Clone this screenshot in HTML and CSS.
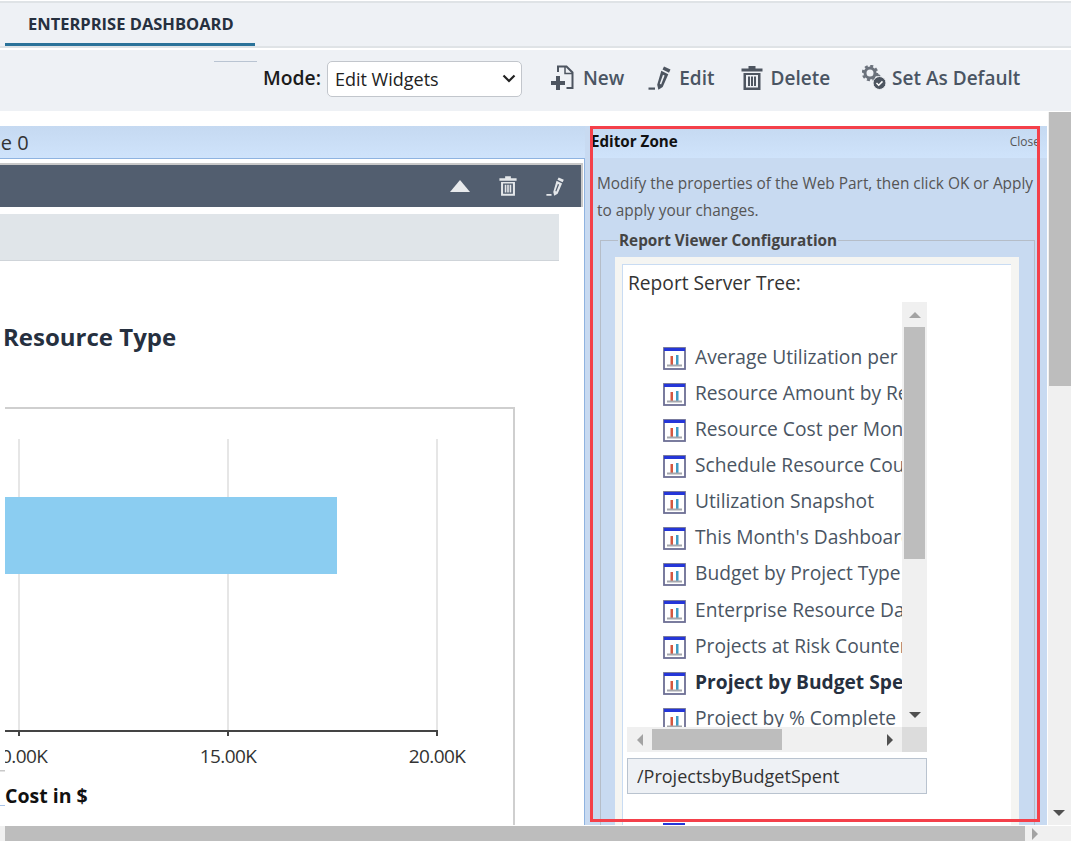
FILE: index.html
```html
<!DOCTYPE html>
<html lang="en">
<head>
  <meta charset="UTF-8">
  <title>Enterprise Dashboard</title>
  <link rel="stylesheet" href="styles.css">
</head>
<body>
  <svg class="defs" width="0" height="0">
    <symbol id="i-report" viewBox="0 0 23 23">
      <rect x="1" y="1" width="21" height="21" fill="#fff" stroke="#6c6e94" stroke-width="1.800"/>
      <rect x="1" y="1" width="21" height="3" fill="#2536d8"/>
      <rect x="7.500" y="9" width="2.500" height="9" fill="#d4573f"/>
      <rect x="13" y="8" width="2.500" height="10" fill="#3f9cc4"/>
      <rect x="4" y="17.500" width="15" height="2" fill="#a5a7ad"/>
    </symbol>
    <symbol id="i-pencil" viewBox="0 0 24 24">
      <path d="M0.500 21.500h6.500v2.200h-6.500z"/>
      <path d="M16 .5l6.500 3-1.500 3.200-6.500-3.100zM13.300 4.800l7 3.400-5.600 12.800-4.300 2.800-1.200-5zM15 8.800l-3.200 8.900 1.300.7 3.500-8.800z" fill-rule="evenodd"/>
    </symbol>
    <symbol id="i-trash" viewBox="0 0 22 24">
      <path d="M7.500 0h7v2.500h7v3h-21v-3h7zM2.500 7h17v17h-17zM5 9v12.500h12v-12.500zM7 10.500h2v9.500h-2zM10 10.500h2v9.500h-2zM13 10.500h2v9.500h-2z" fill-rule="evenodd"/>
    </symbol>
  </svg>

  <div class="page">
    <div class="tabs">
      <div class="tab">ENTERPRISE DASHBOARD</div>
    </div>

    <div class="toolbar">
      <span class="stub"></span>
      <label class="mode-label" for="mode">Mode:</label>
      <select class="mode" id="mode">
        <option>Edit Widgets</option>
      </select>
      <a class="tool tool-new">
        <svg width="23" height="25" viewBox="0 0 23 25">
          <path d="M7 7v-5.500h8.500l6 6v15.500h-6" fill="none" stroke="#4d5560" stroke-width="2"/>
          <path d="M14 2v6.500h7" fill="none" stroke="#4d5560" stroke-width="1.500"/>
          <path d="M5 11h4v5h5v4h-5v5h-4v-5h-5v-4h5z" fill="#4d5560"/>
        </svg>
        New
      </a>
      <a class="tool tool-edit">
        <svg class="ic-dark" width="24" height="24"><use href="#i-pencil"/></svg>
        Edit
      </a>
      <a class="tool tool-delete">
        <svg class="ic-dark" width="22" height="24"><use href="#i-trash"/></svg>
        Delete
      </a>
      <a class="tool tool-default">
        <svg width="25" height="25" viewBox="0 0 25 25">
          <circle cx="8" cy="8" r="5" fill="none" stroke="#6b727c" stroke-width="3"/>
          <circle cx="8" cy="8" r="7" fill="none" stroke="#6b727c" stroke-width="2.500" stroke-dasharray="3 2.500"/>
          <circle cx="15" cy="13" r="3" fill="none" stroke="#6b727c" stroke-width="2"/>
          <circle cx="17.500" cy="18" r="6.500" fill="#4d5560" stroke="#eef1f5"/>
          <path d="M14.500 18l2.200 2.200 3.800-3.800" fill="none" stroke="#fff" stroke-width="1.500"/>
        </svg>
        Set As Default
      </a>
    </div>

    <div class="work">
      <div class="work-main">
        <div class="zones">
          <div class="zone-left">
            <div class="zone-head"><span class="zone-name">Zone 0</span></div>
            <div class="widget">
              <div class="widget-head">
                <span class="arrow-up"></span>
                <svg class="ic-light" width="18" height="20"><use href="#i-trash"/></svg>
                <svg class="ic-light" width="19" height="19"><use href="#i-pencil"/></svg>
              </div>
              <div class="widget-bar"></div>
              <h2 class="chart-title">Resource Type</h2>
              <svg class="chart" width="520" height="425" viewBox="0 0 520 425">
                <rect x="0" y="370" width="5" height="1.500" fill="#c9c9c9"/>
                <rect x="0" y="405" width="5" height="1" fill="#a9c4e8"/>
                <svg x="5" y="0" width="515" height="425">
                  <path d="M-5 8H509V425" fill="none" stroke="#cfcfcf" stroke-width="2"/>
                  <path d="M14 39V331M223 39V331M432 39V331" stroke="#dedede" stroke-width="1.500"/>
                  <rect x="0" y="97" width="332" height="77" fill="#8bcdf1"/>
                  <path d="M0 331H433M14 331v5M223 331v5M432 331v5" fill="none" stroke="#444" stroke-width="2"/>
                  <text class="tick" x="14" y="363" text-anchor="middle">10.00K</text>
                  <text class="tick" x="223" y="363" text-anchor="middle">15.00K</text>
                  <text class="tick" x="432" y="363" text-anchor="middle">20.00K</text>
                  <text class="axis-name" x="0" y="403">Cost in $</text>
                </svg>
              </svg>
            </div>
          </div>

          <div class="zone-editor">
            <div class="zone-head editor-head">
              <b class="editor-title">Editor Zone</b>
              <span class="editor-close">Close</span>
            </div>
            <div class="editor-body">
              <p class="editor-note">Modify the properties of the Web Part, then click OK or Apply to apply your changes.</p>
              <fieldset class="config">
                <legend>Report Viewer Configuration</legend>
                <div class="config-inner">
                  <div class="config-panel">
                    <div class="tree-label">Report Server Tree:</div>
                    <div class="tree">
                      <ul class="tree-list">
                        <li><svg width="23" height="23"><use href="#i-report"/></svg>Average Utilization per Resource</li>
                        <li><svg width="23" height="23"><use href="#i-report"/></svg>Resource Amount by Resource</li>
                        <li><svg width="23" height="23"><use href="#i-report"/></svg>Resource Cost per Month</li>
                        <li><svg width="23" height="23"><use href="#i-report"/></svg>Schedule Resource Count</li>
                        <li><svg width="23" height="23"><use href="#i-report"/></svg>Utilization Snapshot</li>
                        <li><svg width="23" height="23"><use href="#i-report"/></svg>This Month's Dashboard</li>
                        <li><svg width="23" height="23"><use href="#i-report"/></svg>Budget by Project Type</li>
                        <li class="row-shift"><svg width="23" height="23"><use href="#i-report"/></svg>Enterprise Resource Dashboard</li>
                        <li><svg width="23" height="23"><use href="#i-report"/></svg>Projects at Risk Counter</li>
                        <li class="current"><svg width="23" height="23"><use href="#i-report"/></svg>Project by Budget Spent</li>
                        <li><svg width="23" height="23"><use href="#i-report"/></svg>Project by % Complete</li>
                      </ul>
                      <div class="sb-v">
                        <span class="sb-btn"><i class="tri tri-up tri-off"></i></span>
                        <span class="sb-thumb-v"></span>
                        <span class="sb-fill"></span>
                        <span class="sb-btn"><i class="tri tri-down"></i></span>
                      </div>
                      <div class="sb-h">
                        <span class="sb-btn"><i class="tri tri-left tri-off"></i></span>
                        <span class="sb-thumb-h"></span>
                        <span class="sb-fill"></span>
                        <span class="sb-btn"><i class="tri tri-right"></i></span>
                      </div>
                      <div class="sb-corner"></div>
                    </div>
                    <input class="path-box" type="text" value="/ProjectsbyBudgetSpent">
                    <div class="next-icon"></div>
                  </div>
                </div>
              </fieldset>
            </div>
          </div>
        </div>
        <div class="highlight"></div>
      </div>
      <div class="page-sb-v">
        <span class="page-thumb-v"></span>
        <i class="tri tri-down page-down"></i>
      </div>
    </div>

    <div class="page-sb-h">
      <span class="page-thumb-h"></span>
      <i class="tri tri-right tri-off page-right"></i>
    </div>
  </div>
</body>
</html>
```

FILE: styles.css
```css
body{
  margin: 0;
  font-family: "Open Sans", "Liberation Sans", sans-serif;
  background-color: #fff;
  color: #4a5563;
}
.defs{
  position: absolute;
}
.page{
  width: 1071px;
  height: 841px;
  overflow: hidden;
  display: flex;
  flex-direction: column;
}

/* tabs */
.tabs{
  height: 43px;
  margin-top: 1px;
  border-top: 2px solid #dfe3e6;
  border-bottom: 2px solid #dfe3e6;
  background-color: #eef1f5;
}
.tab{
  width: 227px;
  height: 40px;
  margin-left: 5px;
  padding-left: 23px;
  border-bottom: 3px solid #2a7299;
  font-size: 16.5px;
  font-weight: 700;
  line-height: 42px;
  color: #26303f;
}

/* toolbar */
.toolbar{
  height: 61px;
  margin-top: 2px;
  background-color: #eef1f5;
  display: flex;
  align-items: center;
}
.stub{
  width: 43px;
  height: 1px;
  margin: 11px 6px 0 214px;
  align-self: flex-start;
  background-color: #b9c4d2;
}
.mode-label{
  font-size: 19.3px;
  font-weight: 600;
  color: #1b1b1b;
  margin-right: 6px;
  margin-top: -6px;
}
.mode{
  width: 195px;
  height: 36px;
  margin-top: -4px;
  padding-left: 7px;
  border: 1px solid #c2c6cc;
  border-radius: 5px;
  appearance: none;
  background: #fff url("data:image/svg+xml,%3Csvg xmlns='http://www.w3.org/2000/svg' width='14' height='9'%3E%3Cpath d='M1.500 1.500L7 7l5.500-5.500' fill='none' stroke='%23222' stroke-width='2.200'/%3E%3C/svg%3E") no-repeat right 5px center;
  font-family: "Open Sans", sans-serif;
  font-size: 18px;
  color: #222;
}
.tool{
  display: flex;
  align-items: center;
  font-size: 19px;
  font-weight: 600;
  color: #4a5563;
  margin-top: -6px;
}
.tool-new{
  margin-left: 29px;
  gap: 9px;
}
.tool-edit{
  margin-left: 24px;
  gap: 7px;
}
.tool-delete{
  margin-left: 26px;
  gap: 8px;
}
.tool-default{
  margin-left: 32px;
  gap: 5px;
}
.ic-dark{
  fill: #4d5560;
}
.ic-light{
  fill: #e4e7ea;
}

/* work area */
.work{
  flex: 1;
  min-height: 0;
  display: flex;
  margin-top: 1px;
}
.work-main{
  position: relative;
  width: 1047px;
  padding-top: 14px;
  box-sizing: border-box;
  margin-right: 1px;
}
.zones{
  height: 699px;
  overflow: hidden;
  display: flex;
  background-color: #c8daf1;
}
.zone-head{
  height: 32px;
  background: linear-gradient(#c5d9f1, #cfe3fb);
}
.zone-left{
  width: 585px;
  margin-right: 5px;
  flex: none;
}
.zone-name{
  display: block;
  margin-left: -35px;
  font-size: 20px;
  line-height: 34px;
  color: #333;
}
.widget{
  height: 667px;
  padding-top: 4px;
  border-top: 1px solid #8fb3e0;
  border-right: 1px solid #8fb3e0;
  box-sizing: border-box;
  background-color: #fff;
}
.widget-head{
  width: 581px;
  height: 42px;
  border-top: 2px solid #c9c9c9;
  border-right: 2px solid #c9c9c9;
  background-color: #525e6f;
  display: flex;
  align-items: center;
  justify-content: flex-end;
  gap: 29px;
}
.widget-head .ic-light:last-child{
  margin-right: 16px;
}
.arrow-up{
  width: 0;
  height: 0;
  border-left: 10px solid transparent;
  border-right: 10px solid transparent;
  border-bottom: 12px solid #e8eaec;
}
.widget-bar{
  width: 559px;
  height: 46px;
  margin-top: 7px;
  border-bottom: 1px solid #cfd4d9;
  background-color: #e0e5e9;
}
.chart-title{
  margin: 60px 0 47px 3px;
  font-size: 24px;
  font-weight: 700;
  line-height: 32px;
  color: #26303f;
}
.chart{
  display: block;
}
.tick{
  font-family: "Open Sans", sans-serif;
  font-size: 19px;
  letter-spacing: -0.6px;
  fill: #333;
}
.axis-name{
  font-family: "Open Sans", sans-serif;
  font-size: 19.5px;
  font-weight: 700;
  fill: #111;
}

/* editor zone */
.zone-editor{
  flex: 1;
  min-width: 0;
}
.editor-head{
  display: flex;
  justify-content: space-between;
  align-items: center;
  box-sizing: border-box;
  padding: 0 7px 2px 1px;
}
.editor-title{
  font-size: 15.2px;
  font-weight: 700;
  color: #111;
}
.editor-close{
  font-size: 12px;
  color: #555;
}
.editor-body{
  padding: 12px 0 0 7px;
}
.editor-note{
  width: 440px;
  margin: 0;
  font-size: 15.4px;
  line-height: 27px;
  color: #555;
}
.config{
  width: 435px;
  box-sizing: border-box;
  margin: 6px 0 0 3px;
  padding: 0 15px 0 14px;
  border: 1px solid #b5bdc8;
}
.config legend{
  margin-left: 3px;
  padding: 0 1px;
  font-size: 15.3px;
  font-weight: 700;
  line-height: 20px;
  color: #444;
}
.config-inner{
  margin-top: 7px;
  padding: 7px 8px 40px 7px;
  background-color: #f5f5f2;
}
.config-panel{
  height: 600px;
  padding-left: 4px;
  border-top: 1px solid #c9dcf3;
  border-left: 1px solid #c9dcf3;
  background-color: #fff;
}
.tree-label{
  padding: 0 0 2px 1px;
  font-size: 19.2px;
  line-height: 35px;
  color: #333;
}
.tree{
  width: 300px;
  display: grid;
  grid-template-columns: 275px 25px;
  grid-template-rows: 425px 25px;
}
.tree-list{
  margin: 0;
  padding: 36px 0 0 36px;
  list-style: none;
  overflow: hidden;
  white-space: nowrap;
  font-size: 19.2px;
  color: #4a5563;
}
.tree-list li{
  height: 36px;
  display: flex;
  align-items: center;
  gap: 9px;
}
.tree-list .row-shift{
  margin-top: 1px;
}
.tree-list li svg{
  flex: none;
  margin-top: 5px;
}
.tree-list .current{
  font-weight: 700;
  color: #26303f;
}
.sb-v,.sb-h{
  display: flex;
  background-color: #f0f0f0;
}
.sb-v{
  flex-direction: column;
}
.sb-btn{
  width: 25px;
  height: 25px;
  flex: none;
  display: flex;
  align-items: center;
  justify-content: center;
}
.sb-fill{
  flex: 1;
}
.sb-thumb-v{
  width: 21px;
  height: 232px;
  margin-left: 2px;
  background-color: #bdbdbd;
}
.sb-thumb-h{
  width: 130px;
  height: 21px;
  margin-top: 2px;
  background-color: #bdbdbd;
}
.sb-corner{
  background-color: #dcdcdc;
}
.tri{
  display: block;
  width: 0;
  height: 0;
  border: 0 solid transparent;
}
.tri-up{
  border-width: 0 6px 6px;
  border-bottom-color: #505050;
}
.tri-down{
  border-width: 6px 6px 0;
  border-top-color: #505050;
}
.tri-left{
  border-width: 6px 6px 6px 0;
  border-right-color: #505050;
}
.tri-right{
  border-width: 6px 0 6px 6px;
  border-left-color: #505050;
}
.tri-up.tri-off{
  border-bottom-color: #a3a3a3;
}
.tri-left.tri-off{
  border-right-color: #a3a3a3;
}
.tri-right.tri-off{
  border-left-color: #a3a3a3;
}
.path-box{
  display: block;
  width: 300px;
  height: 36px;
  box-sizing: border-box;
  margin-top: 6px;
  padding: 0 9px;
  border: 1px solid #b9c3cf;
  background-color: #eef1f5;
  font-family: "Open Sans", sans-serif;
  font-size: 18px;
  color: #333;
}
.next-icon{
  width: 22px;
  height: 3px;
  margin: 29px 0 0 36px;
  background-color: #2536d8;
}

/* red box round the editor */
.highlight{
  position: absolute;
  left: 590px;
  top: 14px;
  width: 450px;
  height: 696px;
  box-sizing: border-box;
  border: 3px solid #f4404a;
}

/* page scrollbars */
.page-sb-v{
  flex: 1;
  display: flex;
  flex-direction: column;
  align-items: flex-end;
  background-color: #f0f0f0;
}
.page-thumb-v{
  width: 22px;
  height: 274px;
  background-color: #bdbdbd;
}
.page-down{
  margin: auto 6px 9px 0;
}
.page-sb-h{
  height: 15px;
  margin-top: 1px;
  flex: none;
  display: flex;
  align-items: center;
  padding-left: 5px;
  background-color: #f0f0f0;
}
.page-thumb-h{
  width: 1020px;
  height: 15px;
  background-color: #bdbdbd;
}
.page-right{
  margin-left: 7px;
}
```
